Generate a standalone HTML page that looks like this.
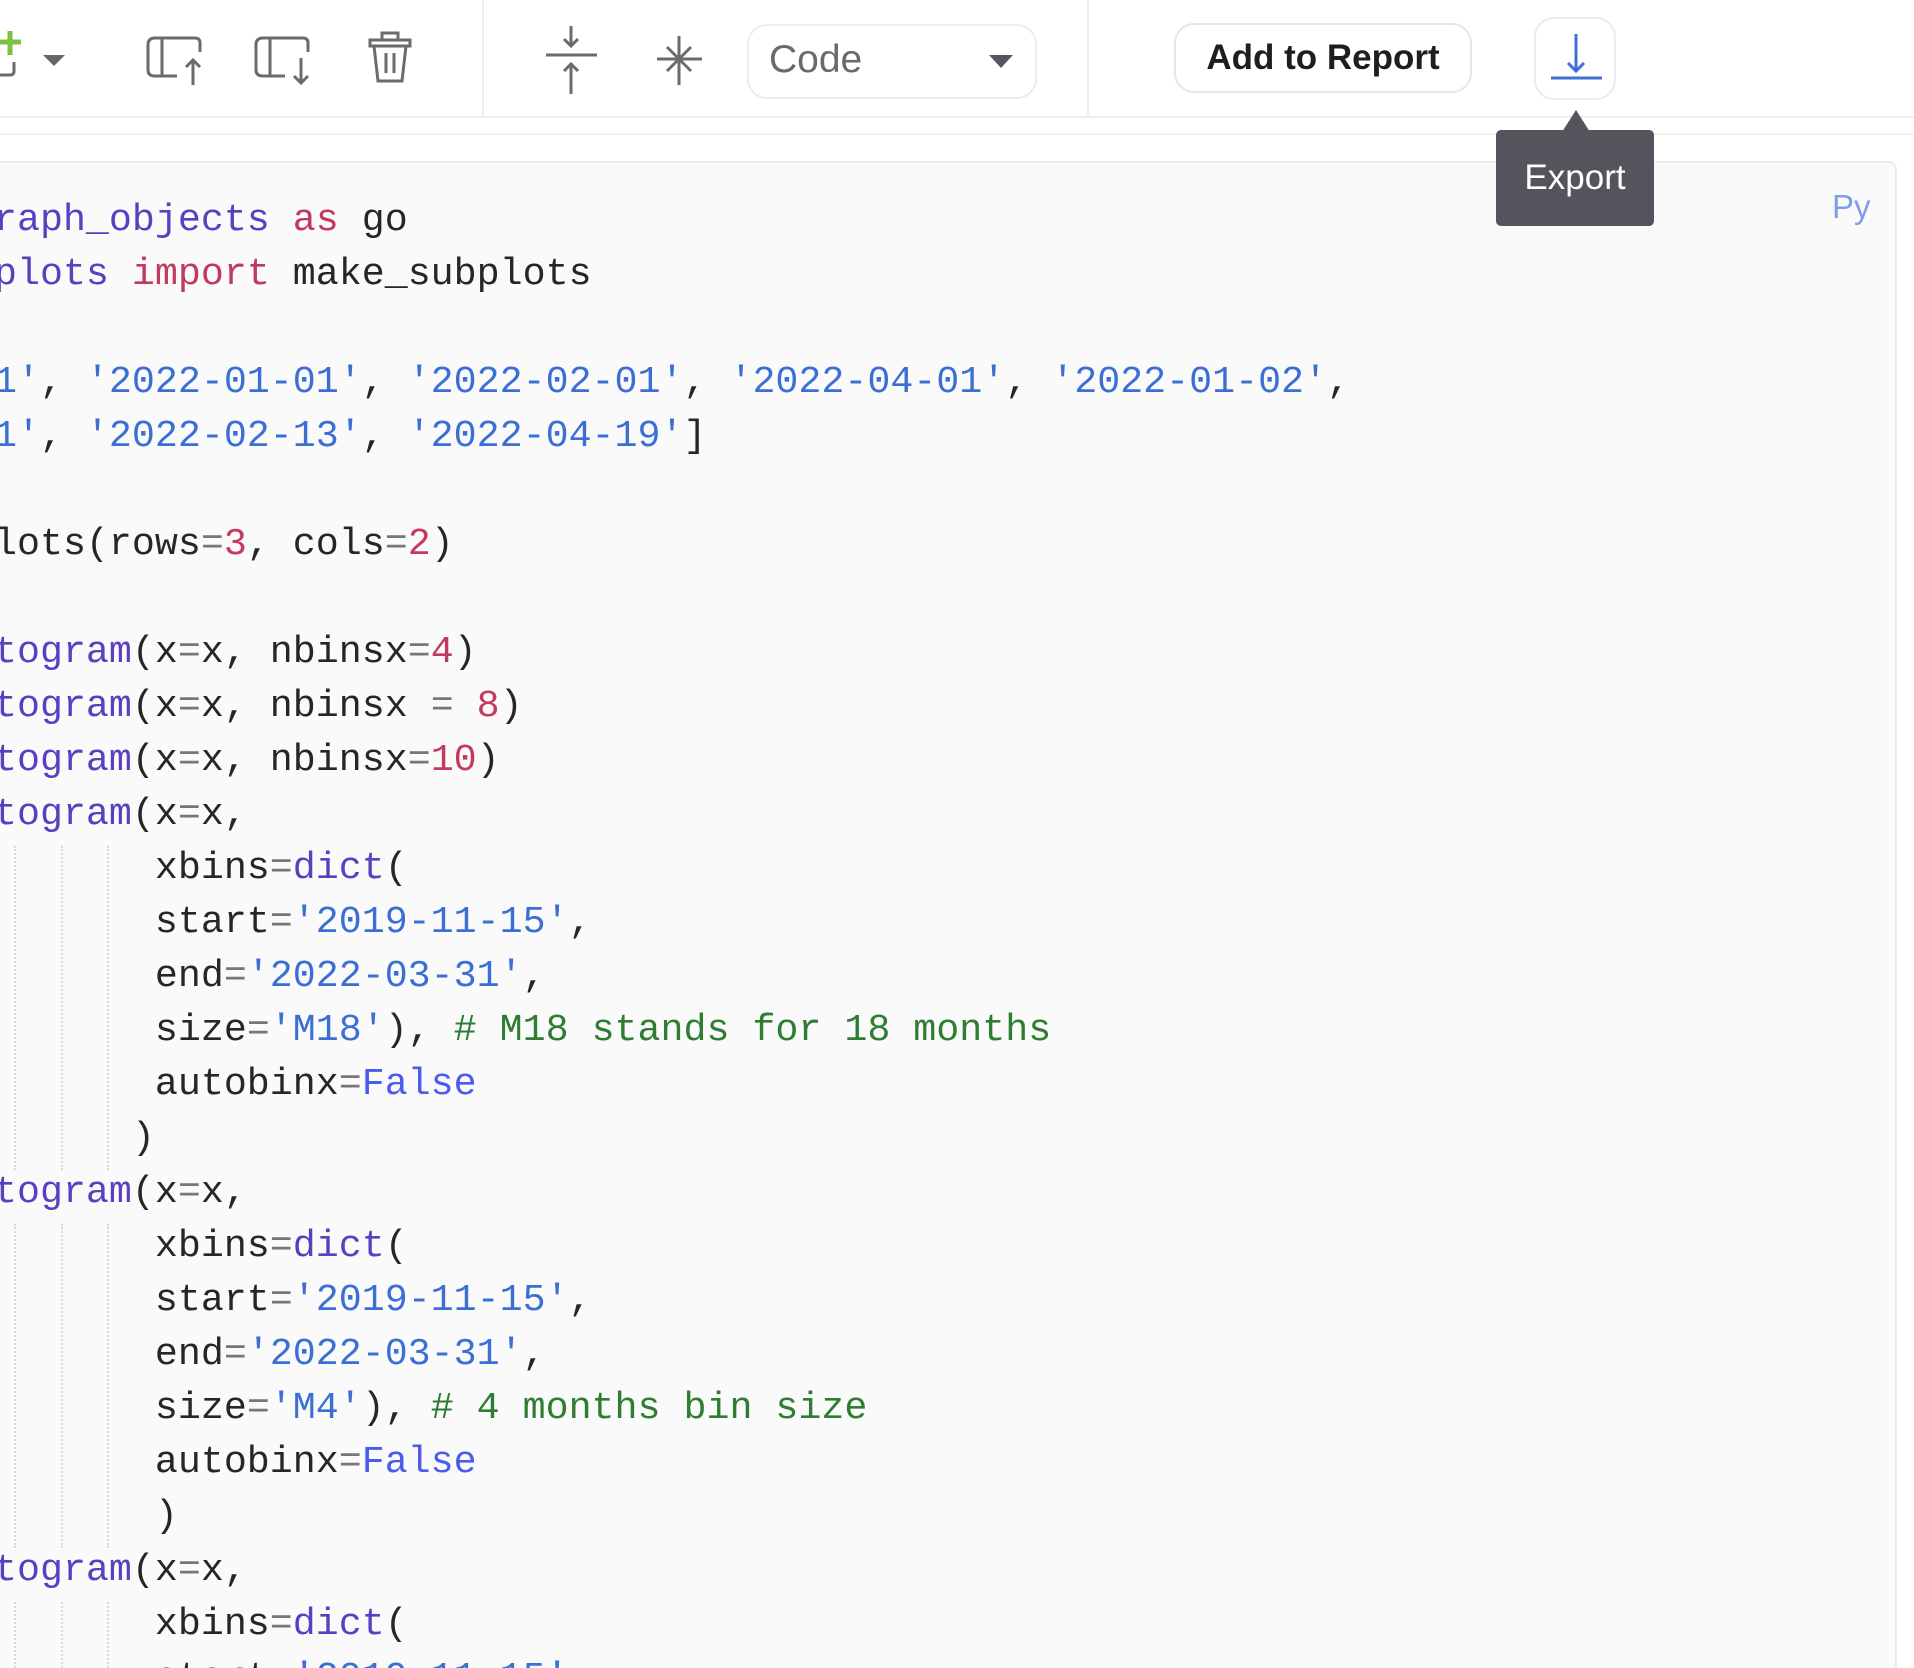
<!DOCTYPE html>
<html style="overflow:hidden;height:1668px"><head><meta charset="utf-8"><style>
*{margin:0;padding:0;box-sizing:border-box}
body{width:1914px;height:1668px;overflow:hidden;background:#fff;position:relative;font-family:"Liberation Sans",sans-serif}
.abs{position:absolute}
.sep{position:absolute;top:0;width:2px;height:117px;background:#efefef}
.cell{position:absolute;left:-10px;top:161px;width:1907px;height:1507px;background:#fafafa;border:2px solid #ececec;border-bottom:none;border-radius:8px 8px 0 0}
pre{position:absolute;left:-6px;top:193px;font-family:"Liberation Mono",monospace;font-size:38.3px;line-height:54px;color:#262626;margin:0}
.f{color:#5a3fbf}.k{color:#c03a5e}.s{color:#3b6fd4}.n{color:#c43a5c}.b{color:#4a5cf0}.c{color:#2e7d32}.o{color:#777}
.g{position:absolute;width:0;border-left:2px dotted #d8d8d8}
</style></head><body>
<svg class="abs" style="left:0;top:0" width="1914" height="140">
 <g fill="none" stroke="#6b6b6b" stroke-width="3">
  <path d="M0 75 H10 Q14 75 14 71 V62"/>
  <path d="M155 38 H195 Q200 38 200 43 V52 M162 38 V76 M155 38 Q148 38 148 45 V70 Q148 76 155 76 H177"/>
  <path d="M193 60 V85 M186 67 L193 60 L200 67"/>
  <path d="M263 38 H303 Q308 38 308 43 V52 M270 38 V76 M263 38 Q256 38 256 45 V70 Q256 76 263 76 H285"/>
  <path d="M301 58 V83 M294 76 L301 83 L308 76"/>
  <path d="M370 40 H410 V46 H370 Z M382 40 V33 H398 V40 M374 46 L378 81 H402 L406 46 M386 53 V73 M394 53 V73"/>
  <path d="M546 55 H597 M571 26 V46 M564 39 L571 46 L578 39 M571 94 V64 M564 71 L571 64 L578 71"/>
  <path d="M657 59 H702 M679 36 V85 M667 47 L691 71 M691 47 L667 71"/>
 </g>
 <path d="M0 42 H21 M10 31 V55" stroke="#7cc142" stroke-width="5"/>
 <path d="M43 55 H65 L54 66 Z" fill="#666"/>
 <rect x="0" y="116" width="1914" height="2" fill="#efefef"/>
 <rect x="0" y="133" width="1914" height="2" fill="#f2f2f2"/>
</svg>
<div class="sep" style="left:482px"></div>
<div class="sep" style="left:1087px"></div>
<div class="abs" style="left:747px;top:24px;width:290px;height:75px;border:2px solid #ececec;border-radius:20px"></div>
<div class="abs" style="left:769px;top:38px;font-size:39px;color:#6a6a6a">Code</div>
<svg class="abs" style="left:988px;top:53px" width="28" height="18"><path d="M1 2 H25 L13 15 Z" fill="#55565e"/></svg>
<div class="abs" style="left:1174px;top:23px;width:298px;height:70px;border:2px solid #e6e6e6;border-radius:20px"></div>
<div class="abs" style="left:1174px;top:38px;width:298px;text-align:center;font-size:35px;font-weight:bold;color:#1e1e1e">Add to Report</div>
<div class="abs" style="left:1534px;top:17px;width:82px;height:83px;border:2px solid #ececec;border-radius:20px"></div>
<svg class="abs" style="left:1534px;top:17px" width="82" height="83"><g stroke="#3f6fd0" stroke-width="3" fill="none"><path d="M42 17 V55 M34 46 L42 54 L50 46"/><path d="M17 61 H68"/></g></svg>
<div class="cell"></div>
<div class="abs" style="left:1832px;top:188px;font-size:33px;color:#7e9ee8">Py</div>
<svg class="abs" style="left:1560px;top:108px" width="32" height="24"><path d="M16 2 L30 24 H2 Z" fill="#54555c"/></svg>
<div class="abs" style="left:1496px;top:130px;width:158px;height:96px;background:#54555c;border-radius:5px;color:#fff;font-size:35px;text-align:center;line-height:96px">Export</div>
<div class="g" style="left:14px;top:846px;height:324px"></div>
<div class="g" style="left:61px;top:846px;height:324px"></div>
<div class="g" style="left:107px;top:846px;height:324px"></div>
<div class="g" style="left:14px;top:1224px;height:324px"></div>
<div class="g" style="left:61px;top:1224px;height:324px"></div>
<div class="g" style="left:107px;top:1224px;height:324px"></div>
<div class="g" style="left:14px;top:1602px;height:66px"></div>
<div class="g" style="left:61px;top:1602px;height:66px"></div>
<div class="g" style="left:107px;top:1602px;height:66px"></div>
<pre><span class="f">raph_objects</span> <span class="k">as</span> go
<span class="f">plots</span> <span class="k">import</span> make_subplots

<span class="s">1'</span>, <span class="s">'2022-01-01'</span>, <span class="s">'2022-02-01'</span>, <span class="s">'2022-04-01'</span>, <span class="s">'2022-01-02'</span>,
<span class="s">1'</span>, <span class="s">'2022-02-13'</span>, <span class="s">'2022-04-19'</span>]

lots(rows<span class="o">=</span><span class="n">3</span>, cols<span class="o">=</span><span class="n">2</span>)

<span class="f">togram</span>(x<span class="o">=</span>x, nbinsx<span class="o">=</span><span class="n">4</span>)
<span class="f">togram</span>(x<span class="o">=</span>x, nbinsx <span class="o">=</span> <span class="n">8</span>)
<span class="f">togram</span>(x<span class="o">=</span>x, nbinsx<span class="o">=</span><span class="n">10</span>)
<span class="f">togram</span>(x<span class="o">=</span>x,
       xbins<span class="o">=</span><span class="f">dict</span>(
       start<span class="o">=</span><span class="s">'2019-11-15'</span>,
       end<span class="o">=</span><span class="s">'2022-03-31'</span>,
       size<span class="o">=</span><span class="s">'M18'</span>), <span class="c"># M18 stands for 18 months</span>
       autobinx<span class="o">=</span><span class="b">False</span>
      )
<span class="f">togram</span>(x<span class="o">=</span>x,
       xbins<span class="o">=</span><span class="f">dict</span>(
       start<span class="o">=</span><span class="s">'2019-11-15'</span>,
       end<span class="o">=</span><span class="s">'2022-03-31'</span>,
       size<span class="o">=</span><span class="s">'M4'</span>), <span class="c"># 4 months bin size</span>
       autobinx<span class="o">=</span><span class="b">False</span>
       )
<span class="f">togram</span>(x<span class="o">=</span>x,
       xbins<span class="o">=</span><span class="f">dict</span>(
       start<span class="o">=</span><span class="s">'2019-11-15'</span>,</pre>
</body></html>
